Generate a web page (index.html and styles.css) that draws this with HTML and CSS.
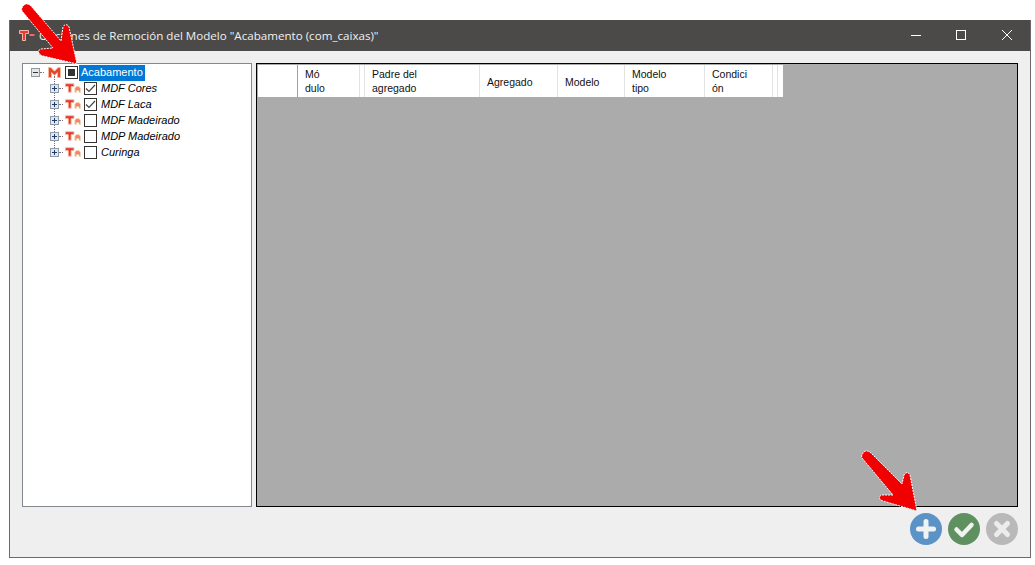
FILE: index.html
```html
<!DOCTYPE html>
<html lang="es">
<head>
<meta charset="utf-8">
<title>Opciones de Remoción</title>
<link rel="stylesheet" href="styles.css">
</head>
<body>
<svg width="0" height="0" class="defs">
  <defs>
    <symbol id="ic-t" viewBox="0 0 17 10">
      <path d="M0.5 0.5H9.5V3.5H6.5V9.5H3.5V3.5H0.5Z" fill="#e5332a" stroke="#f5bda2" stroke-width="1"/>
      <path d="M10.5 9.5V5.5L12 3.5H15L16.5 5.5V9.5H14.8V7.8H12.2V9.5Z" fill="#e98a62" stroke="#f7cfb4" stroke-width=".9"/>
    </symbol>
  </defs>
</svg>
<div class="window">
  <header class="titlebar">
    <svg class="app-icon" width="16" height="11" viewBox="0 0 16 11"><path d="M0.5 0.5H9.5V3.5H6.5V10.5H3.5V3.5H0.5Z" fill="#ee3a30" stroke="#f6b8a4"/><rect x="10.5" y="4" width="5" height="2" fill="#f3695c"/></svg>
    <span class="title">Opciones de Remoción del Modelo "Acabamento (com_caixas)"</span>
    <div class="controls">
      <svg width="46" height="31" viewBox="0 0 46 31"><path d="M19 15.5H29" stroke="#fff"/></svg>
      <svg width="46" height="31" viewBox="0 0 46 31"><rect x="18.5" y="10.5" width="9" height="9" fill="none" stroke="#fff"/></svg>
      <svg width="46" height="31" viewBox="0 0 46 31"><path d="M18 10L28 20M28 10L18 20" stroke="#fff" fill="none"/></svg>
    </div>
  </header>
  <div class="content">
    <div class="main">
      <div class="tree">
        <div class="row root">
          <span class="expander">
            <svg width="9" height="9" viewBox="0 0 9 9"><rect x=".5" y=".5" width="8" height="8" fill="#e6e6e6" stroke="#8f9aa3"/><path d="M2 4.5H7" stroke="#333"/></svg>
          </span>
          <span class="dots"></span>
          <svg class="model-icon" width="13" height="11" viewBox="0 0 13 11"><path d="M.5 10.5V.6H3L6.5 4.2L10 .6H12.5V10.5H9.5V5.5L6.5 8.2L3.5 5.5V10.5Z" fill="#e5452f" stroke="#f3b999" stroke-width=".9"/></svg>
          <span class="check mixed"><i></i></span>
          <span class="label selected">Acabamento</span>
        </div>
        <div class="children">
          <div class="row">
            <span class="expander"><svg width="9" height="9" viewBox="0 0 9 9"><rect x=".5" y=".5" width="8" height="8" fill="#e6e6e6" stroke="#8f9aa3"/><path d="M2 4.5H7M4.5 2V7" stroke="#1d3a78"/></svg></span>
            <span class="dots"></span>
            <svg class="type-icon"><use href="#ic-t"/></svg>
            <span class="check"><svg width="11" height="9" viewBox="0 0 11 9"><path d="M1 4.5L4 7.5L10 1" fill="none" stroke="#444" stroke-width="1.2"/></svg></span>
            <span class="label">MDF Cores</span>
          </div>
          <div class="row">
            <span class="expander"><svg width="9" height="9" viewBox="0 0 9 9"><rect x=".5" y=".5" width="8" height="8" fill="#e6e6e6" stroke="#8f9aa3"/><path d="M2 4.5H7M4.5 2V7" stroke="#1d3a78"/></svg></span>
            <span class="dots"></span>
            <svg class="type-icon"><use href="#ic-t"/></svg>
            <span class="check"><svg width="11" height="9" viewBox="0 0 11 9"><path d="M1 4.5L4 7.5L10 1" fill="none" stroke="#444" stroke-width="1.2"/></svg></span>
            <span class="label">MDF Laca</span>
          </div>
          <div class="row">
            <span class="expander"><svg width="9" height="9" viewBox="0 0 9 9"><rect x=".5" y=".5" width="8" height="8" fill="#e6e6e6" stroke="#8f9aa3"/><path d="M2 4.5H7M4.5 2V7" stroke="#1d3a78"/></svg></span>
            <span class="dots"></span>
            <svg class="type-icon"><use href="#ic-t"/></svg>
            <span class="check"></span>
            <span class="label">MDF Madeirado</span>
          </div>
          <div class="row">
            <span class="expander"><svg width="9" height="9" viewBox="0 0 9 9"><rect x=".5" y=".5" width="8" height="8" fill="#e6e6e6" stroke="#8f9aa3"/><path d="M2 4.5H7M4.5 2V7" stroke="#1d3a78"/></svg></span>
            <span class="dots"></span>
            <svg class="type-icon"><use href="#ic-t"/></svg>
            <span class="check"></span>
            <span class="label">MDP Madeirado</span>
          </div>
          <div class="row last">
            <span class="expander"><svg width="9" height="9" viewBox="0 0 9 9"><rect x=".5" y=".5" width="8" height="8" fill="#e6e6e6" stroke="#8f9aa3"/><path d="M2 4.5H7M4.5 2V7" stroke="#1d3a78"/></svg></span>
            <span class="dots"></span>
            <svg class="type-icon"><use href="#ic-t"/></svg>
            <span class="check"></span>
            <span class="label">Curinga</span>
          </div>
        </div>
      </div>
      <div class="grid">
        <div class="grid-head">
          <div class="cell c0"></div>
          <div class="cell c1">Mó<br>dulo</div>
          <div class="cell c2"></div>
          <div class="cell c3">Padre del<br>agregado</div>
          <div class="cell c4">Agregado</div>
          <div class="cell c5">Modelo</div>
          <div class="cell c6">Modelo<br>tipo</div>
          <div class="cell c7">Condici<br>ón</div>
          <div class="cell c8"></div>
          <div class="cell c9"></div>
        </div>
      </div>
    </div>
    <footer class="actions">
      <svg class="action" viewBox="0 0 32 32"><circle cx="16" cy="16" r="16" fill="#5b93c7"/><path d="M16 8.5V23.5M8.5 16H23.5" stroke="#f2f2f2" stroke-width="5" stroke-linecap="round"/></svg>
      <svg class="action" viewBox="0 0 32 32"><circle cx="16" cy="16" r="16" fill="#5f9060"/><path d="M8.5 16.5L14 22L23.5 12" fill="none" stroke="#f2f2f2" stroke-width="4.5" stroke-linecap="round" stroke-linejoin="round"/></svg>
      <svg class="action" viewBox="0 0 32 32"><circle cx="16" cy="16" r="16" fill="#b9b9b9"/><path d="M10.5 10.5L21.5 21.5M21.5 10.5L10.5 21.5" stroke="#ececec" stroke-width="5" stroke-linecap="round"/></svg>
    </footer>
  </div>
</div>
<svg class="arrows" width="1035" height="565" viewBox="0 0 1035 565">
  <path class="arrow" d="M24 5C26 3 29 4 31 6L61 41L63 27C64 24 68 24 69 27L77 64L43 56C38 55 37 50 41 49L53 48L22 11C21 9 22 7 24 5Z"/>
  <path class="arrow" d="M864 452C866 450 869 451 871 453L902 484L904 475C905 472 909 472 910 475L917 511L883 501C879 500 878 496 882 495L893 495L862 458C861 456 862 454 864 452Z"/>
</svg>
</body>
</html>
```
FILE: styles.css
```css
html, body {
  margin: 0;
  padding: 0;
  background: #fff;
  overflow: hidden;
}
body {
  position: relative;
  width: 1035px;
  height: 565px;
}
.defs {
  position: absolute;
}
.window {
  box-sizing: border-box;
  width: 1022px;
  height: 538px;
  margin: 20px 0 0 9px;
  border: 1px solid #6a6a6a;
  border-top: 0;
  display: flex;
  flex-direction: column;
  background: #efefef;
}
.titlebar {
  height: 31px;
  flex: none;
  background: #4b4a48;
  display: flex;
  align-items: center;
  padding-left: 9px;
  color: #f0f0f0;
  font: 11.6px "Open Sans", "Noto Sans", sans-serif;
}
.app-icon {
  flex: none;
  margin-right: 4px;
}
.title {
  flex: 1;
  white-space: nowrap;
}
.controls {
  display: flex;
  flex: none;
}
.controls svg {
  display: block;
}
.content {
  flex: 1;
  display: flex;
  flex-direction: column;
  padding: 12px 10px 10px 12px;
  min-height: 0;
}
.main {
  flex: none;
  height: 444px;
  display: flex;
  gap: 4px;
}
.tree {
  box-sizing: border-box;
  width: 230px;
  flex: none;
  background: #fff;
  border: 1px solid #828790;
  font: 11px "Liberation Sans", Arial, sans-serif;
  color: #000;
}
.row {
  height: 16px;
  display: flex;
  align-items: center;
  position: relative;
}
.root {
  padding-left: 8px;
}
.children .row {
  padding-left: 27px;
}
.children .row::before {
  content: "";
  position: absolute;
  left: 31px;
  top: -4px;
  height: 16px;
  border-left: 1px dotted #777;
}
.expander {
  position: relative;
  z-index: 1;
  width: 9px;
  height: 9px;
  flex: none;
  background: #fff;
}
.expander svg {
  display: block;
}
.dots {
  width: 4px;
  flex: none;
  border-top: 1px dotted #777;
  margin-right: 2px;
}
.root .dots {
  margin-right: 4px;
}
.model-icon {
  flex: none;
  margin-right: 4px;
}
.type-icon {
  flex: none;
  width: 16px;
  height: 10px;
  margin-right: 3px;
}
.check {
  box-sizing: border-box;
  width: 13px;
  height: 13px;
  flex: none;
  border: 1px solid #333;
  background: #fff;
  display: flex;
  align-items: center;
  justify-content: center;
}
.check i {
  display: block;
  width: 7px;
  height: 7px;
  background: #333;
}
.label {
  font-style: italic;
  padding: 0 2px;
  margin-left: 2px;
  white-space: nowrap;
  line-height: 16px;
}
.root .label {
  font-style: normal;
  margin-left: 1px;
  margin-top: 2px;
  line-height: 14px;
  padding-bottom: 2px;
}
.label.selected {
  background: #0078d7;
  color: #fff;
}
.grid {
  box-sizing: border-box;
  width: 762px;
  flex: none;
  background: #ababab;
  border: 1px solid #000;
  padding: 1px 0 0 1px;
}
.grid-head {
  display: flex;
  height: 32px;
  width: 525px;
  background: #fff;
  font: 10.5px/14px "Liberation Sans", Arial, sans-serif;
  color: #111;
}
.cell {
  box-sizing: border-box;
  flex: none;
  border-right: 1px solid #e3e3e3;
  padding-left: 7px;
  display: flex;
  align-items: center;
  white-space: nowrap;
}
.c0 { width: 40px; border-right-color: #a0a0a0; }
.c1 { width: 62px; }
.c2 { width: 5px; padding: 0; }
.c3 { width: 115px; }
.c4 { width: 78px; padding-top: 2px; }
.c5 { width: 67px; padding-top: 2px; }
.c6 { width: 80px; }
.c7 { width: 68px; }
.c8 { width: 5px; padding: 0; }
.c9 { width: 5px; padding: 0; border: 0; }
.actions {
  display: flex;
  justify-content: flex-end;
  gap: 6px;
  padding-top: 6px;
  padding-right: 2px;
}
.action {
  width: 32px;
  height: 32px;
  display: block;
}
.arrows {
  position: absolute;
  left: 0;
  top: 0;
  pointer-events: none;
}
.arrow {
  fill: #f00000;
  stroke: #fff;
  stroke-width: 1;
  stroke-dasharray: 2 1;
}
```
